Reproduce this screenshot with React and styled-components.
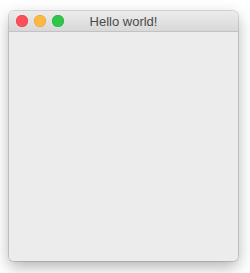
import React from "react";
import styled, { createGlobalStyle } from "styled-components";

const Global = createGlobalStyle`
  html, body { margin: 0; padding: 0; background: #ffffff; }
  body { font-family: "Liberation Sans", Arial, sans-serif; }
`;

const Page = styled.div`
  width: 250px;
  height: 273px;
  padding: 11px 0 0 9px;
  box-sizing: border-box;
  background: #ffffff;
`;

const Window = styled.div`
  width: 229px;
  height: 250px;
  border-radius: 5px;
  background: #ececec;
  box-shadow: 0 0 0 1px rgba(0, 0, 0, 0.13), 0 6px 16px rgba(0, 0, 0, 0.3);
  display: flex;
  flex-direction: column;
  overflow: hidden;
`;

const TitleBar = styled.div`
  height: 20px;
  flex: none;
  display: flex;
  align-items: center;
  position: relative;
  background: linear-gradient(#ececec, #d8d8d8);
  border-bottom: 1px solid #c2c2c2;
  padding-left: 7px;
  gap: 6px;
`;

const Light = styled.span`
  width: 12px;
  height: 12px;
  border-radius: 50%;
  background: ${(p) => p.$color};
  box-shadow: inset 0 0 0 0.5px ${(p) => p.$edge};
  flex: none;
`;

const Title = styled.div`
  position: absolute;
  left: 0;
  right: 0;
  top: 0;
  bottom: 0;
  display: flex;
  align-items: center;
  justify-content: center;
  font-size: 13px;
  color: #4a4a4a;
  pointer-events: none;
`;

const Body = styled.div`
  flex: 1;
  background: #ececec;
`;

export default function App() {
  return (
    <>
      <Global />
      <Page>
        <Window>
          <TitleBar>
            <Light $color="#fc4f5a" $edge="#df3e45" />
            <Light $color="#fdb840" $edge="#de9f34" />
            <Light $color="#2fc64a" $edge="#27aa35" />
            <Title>Hello world!</Title>
          </TitleBar>
          <Body />
        </Window>
      </Page>
    </>
  );
}
